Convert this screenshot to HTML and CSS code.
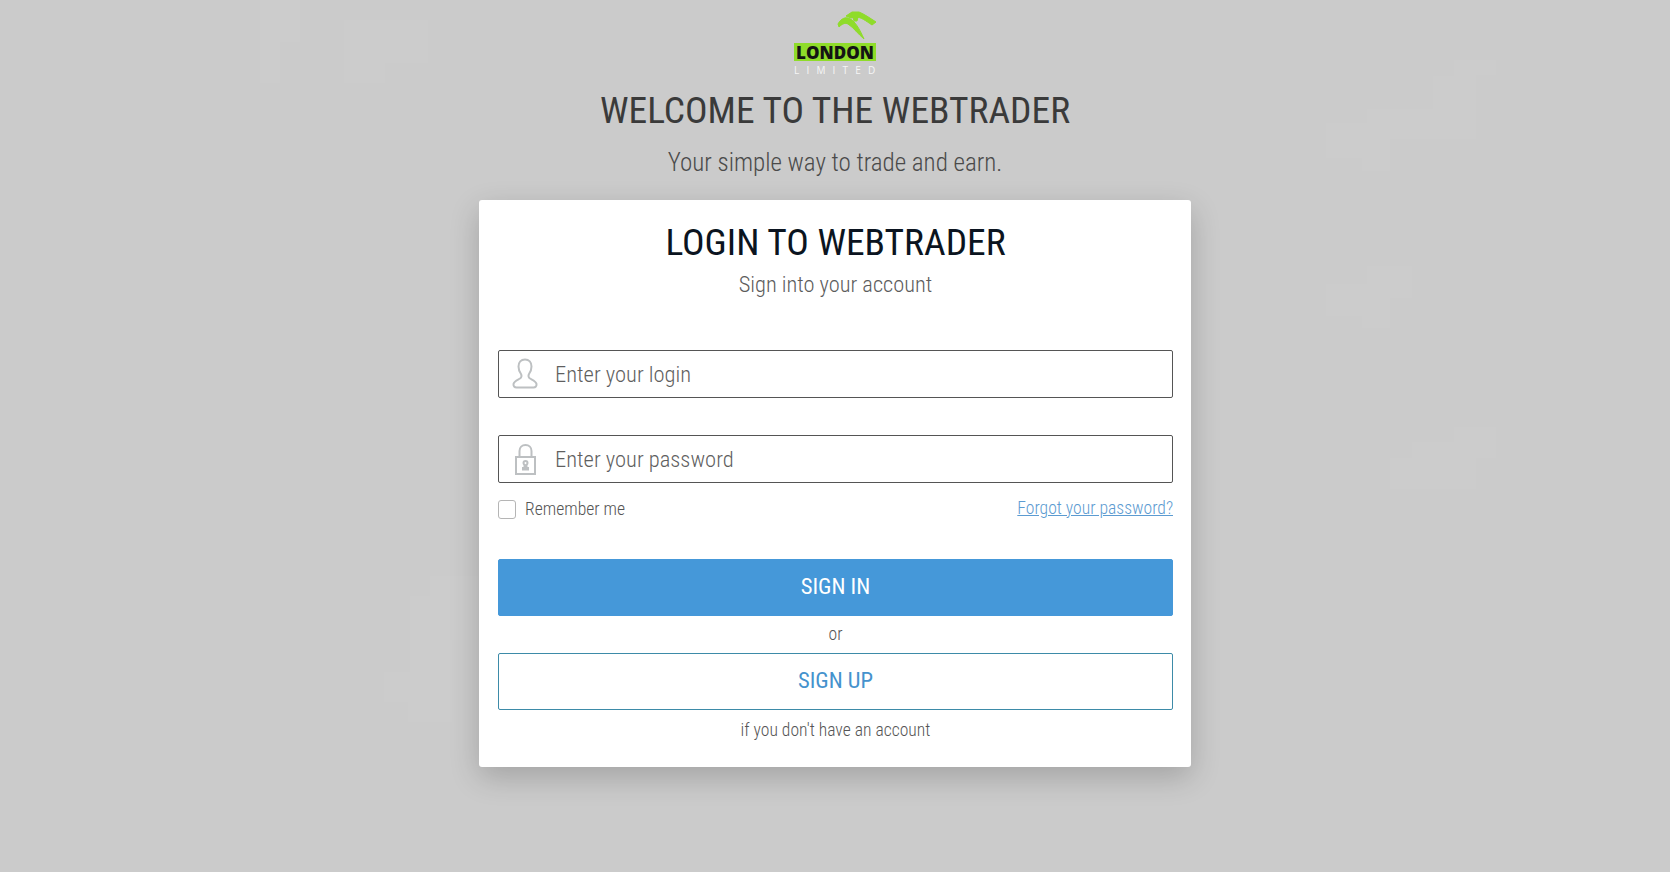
FILE: index.html
```html
<!DOCTYPE HTML>
<html>

<head>
    <meta name="viewport" content="width=device-width, initial-scale=1">
    <title>Webtrader Login</title>
    <link rel="stylesheet" href="styles.css">
</head>

<body>
    <svg class="bg-shapes" viewBox="0 0 1670 872" aria-hidden="true">
        <path d="M260 0h40v42h-20v41h-20z" />
        <path d="M344 20h84v43h-43v20h-41z" />
        <path d="M1454 60h42v15h-20v64h-86v32h-28v-13h-36v-35h41v-14h66V76h21z" />
        <path d="M1367 266h45v32h-22v30h-28v-12h-36v-32h41z" />
        <path d="M1454 427h42v31h-20v31h-86v-31h22v-16h42z" />
        <path d="M430 576h48v64h-26v82h-44v-20h-24v-30h26V596h20z" />
    </svg>
    <div class="page">
        <div class="logo">
            <svg class="logo-mark" viewBox="0 0 50 34">
                <path d="M16 8l6-4h7c5 2 11 6 17 10l-4 3c-6-4-11-8-16-8l-5 1z" />
                <path d="M8 16c2-4 6-7 10-6 7 2 12 12 16 21-6-5-10-11-16-15-3-1.500-6 0-9 3z" />
                <path d="M23 9h5l-1 4h-3z" />
            </svg>
            <div class="logo-name">LONDON</div>
            <div class="logo-sub">LIMITED</div>
        </div>
        <h1>WELCOME TO THE WEBTRADER</h1>
        <p class="tagline">Your simple way to trade and earn.</p>

        <form class="card">
            <h2>LOGIN TO WEBTRADER</h2>
            <p class="card-sub">Sign into your account</p>

            <label class="field field-login">
                <svg class="field-icon" viewBox="0 0 26 32">
                    <path d="M13 1.500c-4 0-6.500 3-6.500 7 0 3 1 5.500 2.500 7.500 1 1.500.5 3.500-1 4.500-2 1.200-6 2.500-6.500 5.500-.3 2 1 3.500 3 3.500h17c2 0 3.300-1.500 3-3.500-.5-3-4.500-4.300-6.500-5.500-1.500-1-2-3-1-4.500 1.500-2 2.500-4.500 2.500-7.500 0-4-2.500-7-6.500-7z" />
                </svg>
                <input type="text" placeholder="Enter your login">
            </label>

            <label class="field field-pass">
                <svg class="field-icon" viewBox="0 0 26 32">
                    <path d="M4 14h19v17H4z" />
                    <path d="M7.500 14V8c0-3.500 2.500-6 6-6s6 2.500 6 6v6" />
                    <path d="M11.500 20a2 2 0 1 1 4 0c0 1-.5 1.500-1 1.800V25h1.500v1.500h-5V25H12.500v-3.200c-.5-.3-1-.8-1-1.800z" />
                </svg>
                <input type="password" placeholder="Enter your password">
            </label>

            <div class="options">
                <label class="remember"><span class="check"></span>Remember me</label>
                <a href="#" class="forgot">Forgot your password?</a>
            </div>

            <button type="button" class="btn btn-primary">SIGN IN</button>
            <div class="or">or</div>
            <button type="button" class="btn btn-outline">SIGN UP</button>
            <div class="hint">if you don't have an account</div>
        </form>
    </div>
</body>

</html>
```

FILE: styles.css
```css
html, body {
    margin: 0;
    height: 100%;
}

body {
    background: #cbcbcb;
    font-family: "Roboto Condensed", Roboto, sans-serif;
    font-stretch: 75%;
    overflow: hidden;
    position: relative;
}

.bg-shapes {
    position: absolute;
    top: 0;
    left: 0;
    width: 1670px;
    height: 872px;
    fill: #ccc;
}

.page {
    position: relative;
    display: flex;
    flex-direction: column;
    align-items: center;
    padding-top: 8px;
}

.logo {
    display: flex;
    flex-direction: column;
    align-items: center;
    width: 84px;
    height: 67px;
}

.logo-mark {
    width: 50px;
    height: 34px;
    flex: none;
    align-self: flex-end;
    margin-right: -3px;
    fill: #8fdc2a;
    stroke: #8fdc2a;
    stroke-width: 1;
    stroke-linejoin: round;
}

.logo-name {
    width: 82px;
    height: 18px;
    margin-top: 1px;
    background: #8fdc2a;
    color: #141414;
    font-family: "Open Sans", sans-serif;
    font-stretch: normal;
    font-weight: 800;
    font-size: 17px;
    line-height: 20px;
    text-align: center;
}

.logo-sub {
    width: 84px;
    margin-top: 3px;
    color: #f6f6f6;
    font-family: "Open Sans", sans-serif;
    font-stretch: normal;
    font-size: 10px;
    line-height: 12px;
    letter-spacing: 7.200px;
    text-indent: 1px;
    white-space: nowrap;
}

h1 {
    margin: 12px 0 0;
    font-size: 37.500px;
    line-height: 46px;
    font-weight: 400;
    color: #3a3a3a;
}

.tagline {
    margin: 15px 0 0;
    font-size: 25px;
    line-height: 30px;
    font-weight: 300;
    color: #4a4a4a;
}

.card {
    box-sizing: border-box;
    width: 712px;
    height: 567px;
    margin-top: 22px;
    padding: 19px 18px 0 19px;
    background: #fff;
    border-radius: 3px;
    box-shadow: 0 10px 30px rgba(0, 0, 0, 0.2);
    display: flex;
    flex-direction: column;
    text-align: center;
}

h2 {
    margin: 0;
    font-size: 37.500px;
    line-height: 46px;
    font-weight: 400;
    color: #0b1420;
}

.card-sub {
    margin: 5px 0 0;
    font-size: 22.400px;
    line-height: 28px;
    font-weight: 300;
    color: #5c5c5c;
}

.field {
    display: flex;
    align-items: center;
    box-sizing: border-box;
    height: 48px;
    border: 1px solid #555;
    border-radius: 2px;
}

.field-login {
    margin-top: 52px;
}

.field-pass {
    margin-top: 37px;
}

.field-icon {
    width: 26px;
    height: 32px;
    margin-left: 13px;
    flex: none;
    fill: none;
    stroke: #bdc0c2;
    stroke-width: 2;
}

.field input {
    flex: 1;
    min-width: 0;
    margin-left: 17px;
    border: 0;
    outline: 0;
    padding: 0;
    font-family: inherit;
    font-stretch: inherit;
    font-size: 22.500px;
    font-weight: 300;
    background: transparent;
}

.field input::placeholder {
    color: #5f5f5f;
    opacity: 1;
}

.options {
    display: flex;
    justify-content: space-between;
    align-items: center;
    height: 24px;
    margin-top: 14px;
    font-size: 17.600px;
    font-weight: 300;
}

.remember {
    display: flex;
    align-items: center;
    color: #555;
}

.check {
    box-sizing: border-box;
    width: 18px;
    height: 19px;
    margin-right: 9px;
    border: 1px solid #b5b5b5;
    border-radius: 3px;
}

.forgot {
    color: #5c9bd1;
    position: relative;
    top: -1px;
}

.btn {
    display: block;
    box-sizing: border-box;
    width: 100%;
    height: 57px;
    border-radius: 2px;
    font-family: inherit;
    font-stretch: inherit;
    font-size: 22.600px;
    font-weight: 400;
    padding: 0 0 3px;
}

.btn-primary {
    margin-top: 38px;
    background: #4598d9;
    border: 1px solid #4598d9;
    color: #fff;
}

.btn-outline {
    background: #fff;
    border: 1px solid #3d8ba8;
    color: #4592cd;
}

.or {
    height: 37px;
    line-height: 37px;
    font-size: 17.600px;
    font-weight: 300;
    color: #555;
}

.hint {
    margin-top: 8px;
    font-size: 17.600px;
    line-height: 24px;
    font-weight: 300;
    color: #555;
}
```
